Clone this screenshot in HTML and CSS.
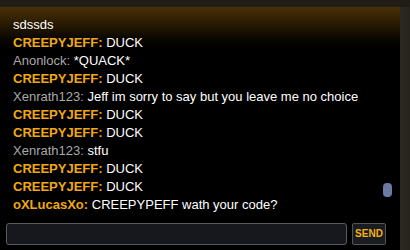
FILE: index.html
```html
<!DOCTYPE html>
<html>
<head>
<meta charset="utf-8">
<link rel="stylesheet" href="styles.css">
</head>
<body>
<div class="frame">
  <div class="chat">
    <div class="messages">
      <div class="line"><span class="msg">sdssds</span></div>
      <div class="line"><span class="name gold">CREEPYJEFF:</span> <span class="msg">DUCK</span></div>
      <div class="line"><span class="name grey">Anonlock:</span> <span class="msg">*QUACK*</span></div>
      <div class="line"><span class="name gold">CREEPYJEFF:</span> <span class="msg">DUCK</span></div>
      <div class="line"><span class="name grey">Xenrath123:</span> <span class="msg">Jeff im sorry to say but you leave me no choice</span></div>
      <div class="line"><span class="name gold">CREEPYJEFF:</span> <span class="msg">DUCK</span></div>
      <div class="line"><span class="name gold">CREEPYJEFF:</span> <span class="msg">DUCK</span></div>
      <div class="line"><span class="name grey">Xenrath123:</span> <span class="msg">stfu</span></div>
      <div class="line"><span class="name gold">CREEPYJEFF:</span> <span class="msg">DUCK</span></div>
      <div class="line"><span class="name gold">CREEPYJEFF:</span> <span class="msg">DUCK</span></div>
      <div class="line"><span class="name gold">oXLucasXo:</span> <span class="msg">CREEPYPEFF wath your code?</span></div>
    </div>
    <div class="thumb"></div>
    <div class="composer">
      <div class="input"></div>
      <div class="send">SEND</div>
    </div>
  </div>
  <div class="rail"></div>
</div>
</body>
</html>
```
FILE: styles.css
```css
html, body {
  margin: 0;
  padding: 0;
  width: 410px;
  height: 250px;
  overflow: hidden;
  background: #201c16;
}
.frame {
  display: flex;
  height: 250px;
  padding-top: 7px;
  box-sizing: border-box;
}
.chat {
  position: relative;
  width: 400px;
  display: flex;
  flex-direction: column;
  background: linear-gradient(#4a3106 0px, #2e1e03 14px, #0a0600 32px, #000 42px);
  font-family: "Liberation Sans", Arial, sans-serif;
  font-size: 13px;
}
.rail {
  width: 10px;
  background: linear-gradient(90deg, #2e2922, #27231d);
}
.messages {
  padding: 9px 10px 0 13px;
  line-height: 18px;
}
.line {
  white-space: nowrap;
  height: 18px;
}
.msg {
  color: #ffffff;
}
.name.gold {
  color: #f2a90f;
  font-weight: bold;
}
.name.grey {
  color: #a9a9a9;
}
.thumb {
  position: absolute;
  left: 383px;
  top: 176px;
  width: 9px;
  height: 14px;
  border-radius: 4px;
  background: #6a7aa3;
}
.composer {
  margin-top: auto;
  display: flex;
  gap: 5px;
  padding: 0 0 5px 6px;
}
.input {
  width: 341px;
  height: 22px;
  box-sizing: border-box;
  border: 1px solid #5c5c5c;
  border-radius: 3px;
  background: #17171e;
}
.send {
  width: 34px;
  height: 22px;
  box-sizing: border-box;
  border: 1px solid #555;
  border-radius: 2px;
  background: #1b1b22;
  color: #f0b214;
  font-weight: bold;
  font-size: 10px;
  line-height: 20px;
  text-align: center;
}
```
